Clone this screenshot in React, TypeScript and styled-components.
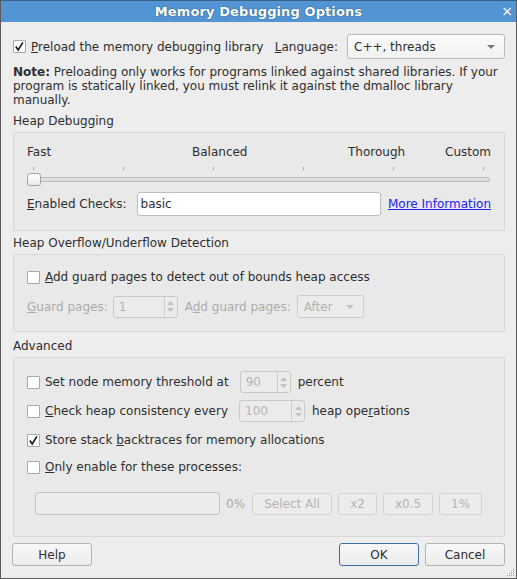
import React from 'react';
import styled, { createGlobalStyle } from 'styled-components';

const Global = createGlobalStyle`
  html, body { margin: 0; padding: 0; background: #ededed; }
  body { font-family: "DejaVu Sans", "Noto Sans", sans-serif; font-size: 12px; color: #2e2e2e; }
  #root { width: 517px; height: 579px; }
  * { box-sizing: border-box; }
`;

const Window = styled.div`
  width: 517px;
  height: 579px;
  border: 1px solid #5a5a5a;
  border-top-color: #3c5f84;
  display: flex;
  flex-direction: column;
  background: #ededed;
  position: relative;
`;

const TitleBar = styled.div`
  height: 21px;
  background: #5294d4;
  display: flex;
  align-items: center;
`;

const TitleSide = styled.div`
  width: 18px;
  color: #fff;
  font-size: 14px;
  text-align: center;
  line-height: 21px;
`;

const Title = styled.div`
  flex: 1;
  text-align: center;
  color: #fff;
  font-weight: bold;
  font-size: 13px;
  letter-spacing: 0.1px;
  text-shadow: 0 0 1px #2c5680, 0 0 1px #2c5680;
`;

const Body = styled.div`
  flex: 1;
  display: flex;
  flex-direction: column;
  padding: 12px 11px 11px 11px;
`;

const TopRow = styled.div`
  display: flex;
  align-items: center;
  height: 25px;
  padding-left: 1px;
`;

const CheckLabel = styled.label<{ $disabled?: boolean }>`
  display: flex;
  align-items: center;
  gap: 5px;
  white-space: nowrap;
  color: ${p => (p.$disabled ? '#acacac' : '#2e2e2e')};
`;

const BoxWrap = styled.span`
  width: 13px;
  height: 13px;
  background: #fff;
  border: 1px solid #a9a9a9;
  border-radius: 1px;
  display: inline-flex;
  align-items: center;
  justify-content: center;
  flex: none;
`;

const Check: React.FC<{ on?: boolean }> = ({ on }) => (
  <BoxWrap>
    {on && (
      <svg width="11" height="11" viewBox="0 0 11 11">
        <path d="M1.8 5.6 L4.2 9 L8.9 1.4" fill="none" stroke="#1e1e1e" strokeWidth="1.7" strokeLinejoin="miter" />
      </svg>
    )}
  </BoxWrap>
);

const LangLabel = styled.span`
  margin-left: auto;
  margin-right: 9px;
`;

const Combo = styled.div<{ $w: number; $h?: number; $ml?: number; $disabled?: boolean }>`
  width: ${p => p.$w}px;
  height: ${p => p.$h ?? 25}px;
  margin-left: ${p => p.$ml ?? 0}px;
  border: 1px solid ${p => (p.$disabled ? '#cdcdcd' : '#b9b9b9')};
  border-radius: 3px;
  background: ${p => (p.$disabled ? '#ebebeb' : 'linear-gradient(#fbfbfb, #f1f1f1)')};
  color: ${p => (p.$disabled ? '#b2b2b2' : '#2e2e2e')};
  display: flex;
  align-items: center;
  justify-content: space-between;
  padding: 0 9px 0 6px;
  flex: none;
`;

const Arrow: React.FC<{ color?: string }> = ({ color = '#7a7a7a' }) => (
  <svg width="8" height="4" viewBox="0 0 8 4">
    <path d="M0 0 H8 L4 4 Z" fill={color} />
  </svg>
);

const Note = styled.div`
  margin-top: 6px;
  padding-left: 1px;
  line-height: 14px;
  b { font-weight: bold; }
`;

const SectionLabel = styled.div<{ $mt: number }>`
  margin-top: ${p => p.$mt}px;
  padding-left: 1px;
  line-height: 16px;
`;

const Group = styled.div<{ $pad: string }>`
  margin-top: 3px;
  margin-left: 1px;
  border: 1px solid #d7d7d7;
  border-radius: 2px;
  background: #e9e9e9;
  padding: ${p => p.$pad};
  display: flex;
  flex-direction: column;
`;

const SliderLabels = styled.div`
  display: grid;
  grid-template-columns: 165px 156px 97px 1fr;
  line-height: 16px;
  span:last-child { justify-self: end; }
`;

const SliderArea = styled.div`
  display: flex;
  flex-direction: column;
`;

const Ticks = styled.div`
  display: flex;
  justify-content: space-between;
  padding: 0 7px 0 6px;
  height: 11px;
`;

const Tick = styled.span`
  width: 1px;
  height: 3px;
  margin-top: 7px;
  background: #a8a8a8;
`;

const GrooveBox = styled.div`
  position: relative;
  height: 16px;
  display: flex;
  align-items: center;
  padding-right: 1px;
`;

const Groove = styled.div`
  flex: 1;
  height: 5px;
  border: 1px solid #bcbcbc;
  border-radius: 3px;
  background: #dedede;
`;

const Handle = styled.div`
  position: absolute;
  left: 0;
  top: 2px;
  width: 14px;
  height: 13px;
  border: 1px solid #a4a4a4;
  border-radius: 3px;
  background: linear-gradient(#ffffff, #eaeaea);
`;

const EnabledRow = styled.div`
  display: flex;
  align-items: center;
  height: 24px;
  margin-top: 5px;
`;

const TextField = styled.div`
  flex: 1;
  height: 24px;
  margin: 0 7px 0 10px;
  background: #fff;
  border: 1px solid #bdbdbd;
  border-radius: 3px;
  display: flex;
  align-items: center;
  padding-left: 3px;
`;

const Link = styled.a`
  color: #2323f5;
  text-decoration: underline;
  white-space: nowrap;
`;

const Row = styled.div<{ $h: number; $mt?: number; $indent?: number }>`
  display: flex;
  align-items: center;
  height: ${p => p.$h}px;
  margin-top: ${p => p.$mt ?? 0}px;
  padding-left: ${p => p.$indent ?? 0}px;
  white-space: nowrap;
`;

const Dim = styled.span<{ $ml?: number }>`
  color: #acacac;
  margin-left: ${p => p.$ml ?? 0}px;
`;

const Text = styled.span<{ $ml?: number }>`
  margin-left: ${p => p.$ml ?? 0}px;
`;

const SpinBox = styled.div<{ $w: number; $ml: number; $h?: number }>`
  width: ${p => p.$w}px;
  height: ${p => p.$h ?? 22}px;
  margin-left: ${p => p.$ml}px;
  border: 1px solid #c9c9c9;
  border-radius: 3px;
  background: #ebebeb;
  display: flex;
  color: #b4b4b4;
  flex: none;
`;

const SpinText = styled.div`
  flex: 1;
  display: flex;
  align-items: center;
  padding-left: 5px;
`;

const SpinArrows = styled.div`
  width: 13px;
  border-left: 1px solid #cdcdcd;
  display: flex;
  flex-direction: column;
  align-items: center;
  justify-content: center;
  gap: 3px;
`;

const Spin: React.FC<{ w: number; ml: number; value: string; h?: number }> = ({ w, ml, value, h }) => (
  <SpinBox $w={w} $ml={ml} $h={h}>
    <SpinText>{value}</SpinText>
    <SpinArrows>
      <svg width="7" height="4" viewBox="0 0 7 4"><path d="M0 4 L3.5 0 L7 4 Z" fill="#c2c2c2" /></svg>
      <svg width="7" height="4" viewBox="0 0 7 4"><path d="M0 0 L3.5 4 L7 0 Z" fill="#c2c2c2" /></svg>
    </SpinArrows>
  </SpinBox>
);

const Progress = styled.div`
  width: 185px;
  height: 23px;
  border: 1px solid #c4c4c4;
  border-radius: 3px;
  background: #ebebeb;
`;

const SmallButton = styled.div<{ $w: number; $ml: number }>`
  width: ${p => p.$w}px;
  height: 22px;
  margin-left: ${p => p.$ml}px;
  border: 1px solid #d2d2d2;
  border-radius: 3px;
  background: #ececec;
  color: #b4b4b4;
  display: flex;
  align-items: center;
  justify-content: center;
`;

const ButtonBar = styled.div`
  display: flex;
  margin-top: 6px;
  gap: 6px;
`;

const Spacer = styled.div`
  flex: 1;
`;

const Button = styled.div<{ $default?: boolean }>`
  width: 80px;
  height: 23px;
  border: 1px solid ${p => (p.$default ? '#3c71a6' : '#b3b3b3')};
  border-radius: 3px;
  background: linear-gradient(#f8f8f8, #ececec);
  display: flex;
  align-items: center;
  justify-content: center;
`;

const Grip = styled.svg`
  position: absolute;
  right: 1px;
  bottom: 1px;
`;

const U = styled.span`
  text-decoration: underline;
`;

export default function App() {
  return (
    <>
      <Global />
      <Window>
        <TitleBar>
          <TitleSide />
          <Title>Memory Debugging Options</Title>
          <TitleSide>×</TitleSide>
        </TitleBar>
        <Body>
          <TopRow>
            <CheckLabel>
              <Check on />
              <span><U>P</U>reload the memory debugging library</span>
            </CheckLabel>
            <LangLabel><U>L</U>anguage:</LangLabel>
            <Combo $w={158}>
              <span>C++, threads</span>
              <Arrow />
            </Combo>
          </TopRow>
          <Note>
            <b>Note:</b> Preloading only works for programs linked against shared libraries. If your program is statically linked, you must relink it against the dmalloc library manually.
          </Note>

          <SectionLabel $mt={6}>Heap Debugging</SectionLabel>
          <Group $pad="11px 13px 14px 13px">
            <SliderLabels>
              <span>Fast</span>
              <span>Balanced</span>
              <span>Thorough</span>
              <span>Custom</span>
            </SliderLabels>
            <SliderArea>
              <Ticks>
                {[0, 1, 2, 3, 4, 5].map(i => <Tick key={i} />)}
              </Ticks>
              <GrooveBox>
                <Groove />
                <Handle />
              </GrooveBox>
            </SliderArea>
            <EnabledRow>
              <span><U>E</U>nabled Checks:</span>
              <TextField>basic</TextField>
              <Link>More Information</Link>
            </EnabledRow>
          </Group>

          <SectionLabel $mt={4}>Heap Overflow/Underflow Detection</SectionLabel>
          <Group $pad="13px 13px 13px 13px">
            <Row $h={18}>
              <CheckLabel>
                <Check />
                <span><U>A</U>dd guard pages to detect out of bounds heap access</span>
              </CheckLabel>
            </Row>
            <Row $h={23} $mt={9}>
              <Dim><U>G</U>uard pages:</Dim>
              <Spin w={65} ml={5} value="1" />
              <Dim $ml={7}>A<U>d</U>d guard pages:</Dim>
              <Combo $w={67} $h={23} $ml={6} $disabled>
                <span>After</span>
                <Arrow color="#c2c2c2" />
              </Combo>
            </Row>
          </Group>

          <SectionLabel $mt={6}>Advanced</SectionLabel>
          <Group $pad="13px 13px 21px 13px">
            <Row $h={22}>
              <CheckLabel>
                <Check />
                <span>Set node memory threshold at</span>
              </CheckLabel>
              <Spin w={51} ml={11} value="90" />
              <Text $ml={7}>percent</Text>
            </Row>
            <Row $h={22} $mt={7}>
              <CheckLabel>
                <Check />
                <span><U>C</U>heck heap consistency every</span>
              </CheckLabel>
              <Spin w={66} ml={11} value="100" />
              <Text $ml={7}>heap ope<U>r</U>ations</Text>
            </Row>
            <Row $h={22} $mt={7}>
              <CheckLabel>
                <Check on />
                <span>Store stack <U>b</U>acktraces for memory allocations</span>
              </CheckLabel>
            </Row>
            <Row $h={22} $mt={5}>
              <CheckLabel>
                <Check />
                <span><U>O</U>nly enable for these processes:</span>
              </CheckLabel>
            </Row>
            <Row $h={23} $mt={14} $indent={8}>
              <Progress />
              <Dim $ml={6}>0%</Dim>
              <SmallButton $w={80} $ml={7}>Select All</SmallButton>
              <SmallButton $w={39} $ml={6}>x2</SmallButton>
              <SmallButton $w={50} $ml={6}>x0.5</SmallButton>
              <SmallButton $w={43} $ml={6}>1%</SmallButton>
            </Row>
          </Group>

          <ButtonBar>
            <Button>Help</Button>
            <Spacer />
            <Button $default>OK</Button>
            <Button>Cancel</Button>
          </ButtonBar>
        </Body>
        <Grip width="10" height="10" viewBox="0 0 10 10">
          {[
            [8, 2], [6, 4], [8, 4], [4, 6], [6, 6], [8, 6], [2, 8], [4, 8], [6, 8], [8, 8],
          ].map(([x, y], i) => (
            <rect key={i} x={x} y={y} width="1" height="1" fill="#a0a0a0" />
          ))}
        </Grip>
      </Window>
    </>
  );
}
